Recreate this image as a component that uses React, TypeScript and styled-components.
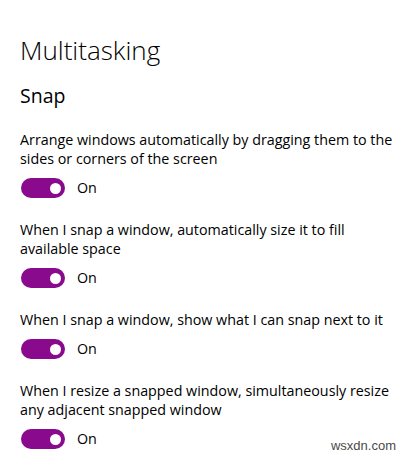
import React from "react"
import styled, { createGlobalStyle } from "styled-components"

const GlobalStyle = createGlobalStyle`
  html, body {
    margin: 0;
    padding: 0;
    background: #fff;
  }

  body {
    font-family: "Open Sans", "Noto Sans", sans-serif;
    color: #000;
  }
`

const Page = styled.div`
  position: relative;
  display: flex;
  flex-direction: column;
  width: 408px;
  height: 463px;
  box-sizing: border-box;
  padding: 34px 14px 0 20px;
  overflow: hidden;
`

const Title = styled.h1`
  margin: 0 0 17px;
  font-size: 26px;
  line-height: 32px;
  font-weight: 300;
`

const Section = styled.h2`
  margin: 0 0 21px;
  font-size: 19.5px;
  line-height: 26px;
  font-weight: 400;
`

const List = styled.div`
  display: flex;
  flex-direction: column;
  gap: 22px;
`

const Setting = styled.div`
  display: flex;
  flex-direction: column;
  gap: 10px;
`

const Label = styled.div`
  font-size: 14.3px;
  line-height: 19px;
`

const ToggleRow = styled.div`
  display: flex;
  align-items: center;
  gap: 12px;
  padding-left: 1px;
`

const Track = styled.div<{ $on: boolean }>`
  position: relative;
  width: 44px;
  height: 20px;
  border-radius: 10px;
  box-sizing: border-box;
  background: ${(p) => (p.$on ? "#8a0a8e" : "transparent")};
  border: ${(p) => (p.$on ? "none" : "2px solid #333")};

  &:after {
    content: "";
    position: absolute;
    top: 4.5px;
    ${(p) => (p.$on ? "right: 4.5px;" : "left: 4.5px;")}
    width: 11px;
    height: 11px;
    border-radius: 50%;
    background: ${(p) => (p.$on ? "#fff" : "#333")};
  }
`

const State = styled.span`
  font-size: 14.3px;
  line-height: 20px;
`

// watermark sitting over the bottom-right corner of the shot
const Watermark = styled.span`
  position: absolute;
  right: 12px;
  bottom: 10px;
  font-family: "Liberation Sans", Arial, sans-serif;
  font-size: 13px;
  color: #4a4a4a;
`

const settings = [
  "Arrange windows automatically by dragging them to the sides or corners of the screen",
  "When I snap a window, automatically size it to fill available space",
  "When I snap a window, show what I can snap next to it",
  "When I resize a snapped window, simultaneously resize any adjacent snapped window",
]

export default function App() {
  return (
    <>
      <GlobalStyle />
      <Page>
        <Title>Multitasking</Title>
        <Section>Snap</Section>
        <List>
          {settings.map((text) => (
            <Setting key={text}>
              <Label>{text}</Label>
              <ToggleRow>
                <Track $on={true} />
                <State>On</State>
              </ToggleRow>
            </Setting>
          ))}
        </List>
        <Watermark>wsxdn.com</Watermark>
      </Page>
    </>
  )
}
